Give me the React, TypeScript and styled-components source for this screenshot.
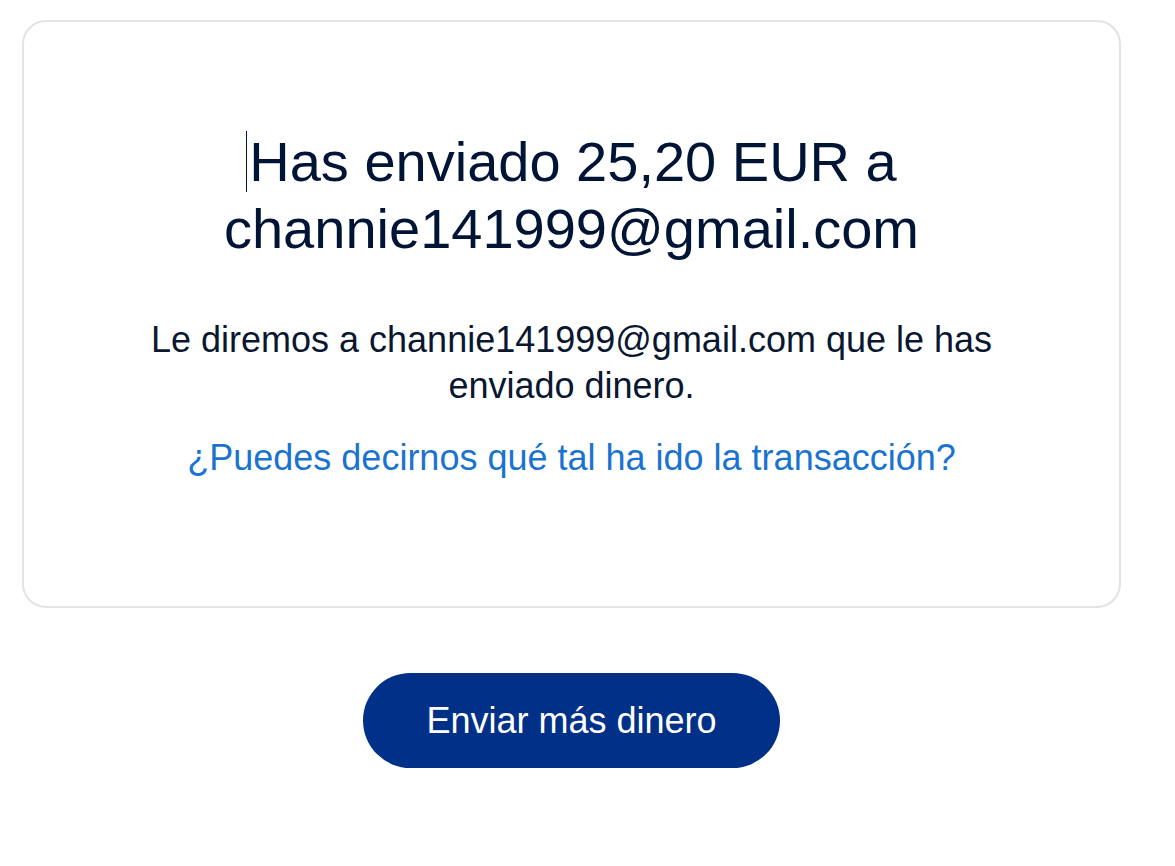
import styled, { createGlobalStyle } from "styled-components";

const GlobalStyle = createGlobalStyle`
  html, body {
    margin: 0;
    padding: 0;
    background: #ffffff;
  }
  body {
    font-family: "Liberation Sans", Arial, sans-serif;
  }
`;

function App() {
  return (
    <>
      <GlobalStyle />
      <Page>
        <Card>
          <Title>
            <Caret />
            Has enviado 25,20 EUR a channie141999@gmail.com
          </Title>
          <Message>
            Le diremos a channie141999@gmail.com que le has enviado dinero.
          </Message>
          <FeedbackLink href="#">
            ¿Puedes decirnos qué tal ha ido la transacción?
          </FeedbackLink>
        </Card>
        <Actions>
          <PrimaryButton type="button">Enviar más dinero</PrimaryButton>
        </Actions>
      </Page>
    </>
  );
}

export default App;

const Page = styled.main`
  width: 1099px;
  padding: 20px 0 0 22px;
  display: flex;
  flex-direction: column;
`;

const Card = styled.section`
  box-sizing: border-box;
  width: 1099px;
  height: 588px;
  border: 2px solid #e3e3e3;
  border-radius: 24px;
  padding: 106px 120px 0;
  display: flex;
  flex-direction: column;
  align-items: center;
  text-align: center;
`;

const Title = styled.h1`
  margin: 0;
  max-width: 720px;
  font-size: 56px;
  line-height: 67px;
  font-weight: 400;
  color: #001435;
`;

const Caret = styled.span`
  display: inline-block;
  width: 0;
  height: 61px;
  margin-right: 2px;
  border-left: 1.5px solid #001435;
  vertical-align: -11px;
`;

const Message = styled.p`
  margin: 55px 0 0;
  max-width: 860px;
  font-size: 36px;
  line-height: 46px;
  color: #0a1730;
`;

const FeedbackLink = styled.a`
  margin-top: 26px;
  font-size: 36px;
  line-height: 46px;
  color: #1a73d1;
  text-decoration: none;
`;

const Actions = styled.div`
  display: flex;
  justify-content: center;
  margin-top: 65px;
`;

const PrimaryButton = styled.button`
  width: 417px;
  height: 95px;
  border: none;
  border-radius: 48px;
  background: #003087;
  color: #ffffff;
  font-family: "Liberation Sans", Arial, sans-serif;
  font-size: 36px;
  cursor: pointer;
`;
